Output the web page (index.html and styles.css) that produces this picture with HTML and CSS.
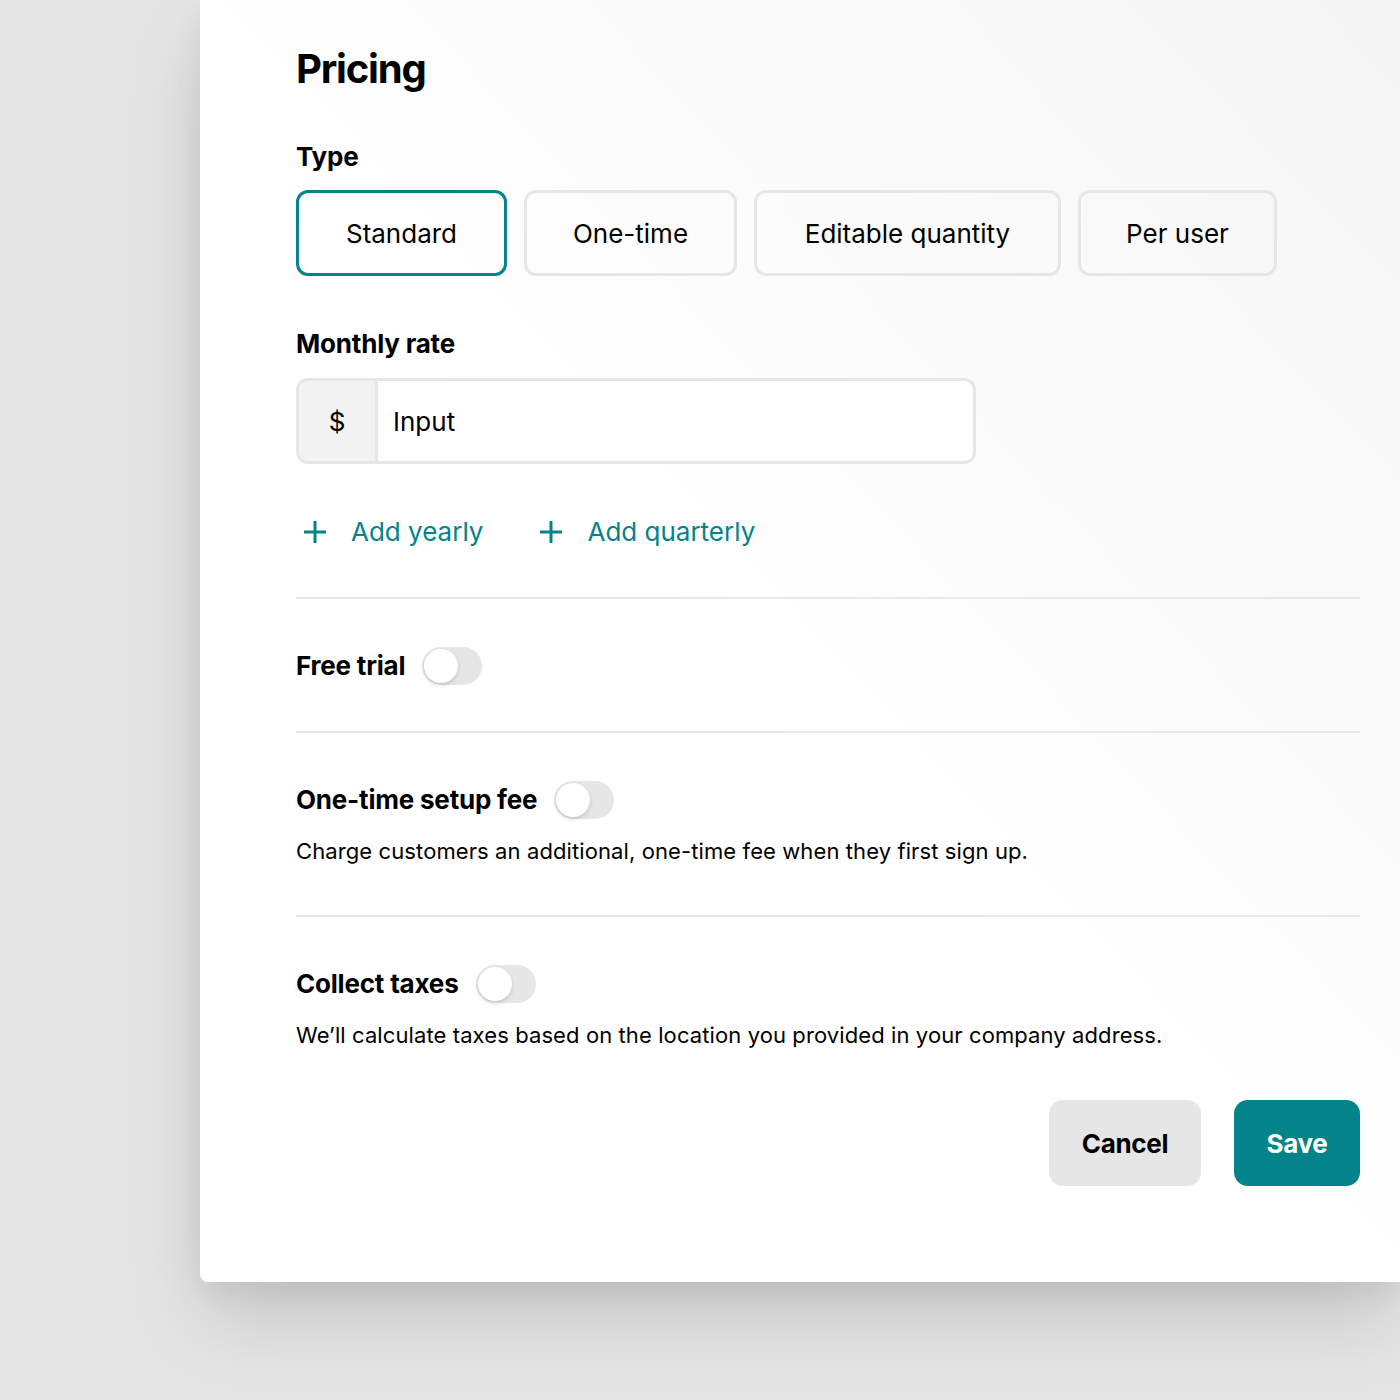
FILE: index.html
```html
<!DOCTYPE html>
<html lang="en">
<head>
<meta charset="utf-8">
<title>Pricing</title>
<link rel="stylesheet" href="styles.css">
</head>
<body>
<div class="card">
  <h1 class="title">Pricing</h1>

  <div class="label type-label">Type</div>
  <div class="types">
    <button class="type t-standard active">Standard</button>
    <button class="type t-onetime">One-time</button>
    <button class="type t-editable">Editable quantity</button>
    <button class="type t-peruser">Per user</button>
  </div>

  <div class="label rate-label">Monthly rate</div>
  <div class="input">
    <span class="prefix">$</span>
    <span class="value">Input</span>
  </div>

  <div class="adds">
    <a class="add">
      <svg class="plus" viewBox="0 0 24 24" width="24" height="24"><path d="M12 1v22M1 12h22" stroke="currentColor" stroke-width="3" fill="none"/></svg>
      <span>Add yearly</span>
    </a>
    <a class="add">
      <svg class="plus" viewBox="0 0 24 24" width="24" height="24"><path d="M12 1v22M1 12h22" stroke="currentColor" stroke-width="3" fill="none"/></svg>
      <span>Add quarterly</span>
    </a>
  </div>

  <div class="section first">
    <div class="row"><span class="label">Free trial</span><span class="toggle"><span class="knob"></span></span></div>
  </div>

  <div class="section second">
    <div class="row"><span class="label">One-time setup fee</span><span class="toggle"><span class="knob"></span></span></div>
    <p class="desc">Charge customers an additional, one-time fee when they first sign up.</p>
  </div>

  <div class="section third">
    <div class="row"><span class="label">Collect taxes</span><span class="toggle"><span class="knob"></span></span></div>
    <p class="desc">We’ll calculate taxes based on the location you provided in your company address.</p>
  </div>

  <div class="actions">
    <button class="btn cancel">Cancel</button>
    <button class="btn save">Save</button>
  </div>
</div>
</body>
</html>
```

FILE: styles.css
```css
* { box-sizing: border-box; }
html, body { margin: 0; padding: 0; }
body {
  background: #e6e6e6;
  font-family: Inter, "Liberation Sans", Arial, sans-serif;
  color: #000;
  width: 1400px;
  height: 1400px;
  overflow: hidden;
}
.card {
  margin-left: 200px;
  width: 1200px;
  padding: 45px 40px 96px 96px;
  background: linear-gradient(to bottom left, #f5f5f5 0%, #ffffff 55%);
  border-radius: 0 0 0 8px;
  box-shadow: 0 40px 80px rgba(0,0,0,0.14), 0 10px 30px rgba(0,0,0,0.06);
}
.title {
  margin: 0;
  font-size: 40px;
  line-height: 48px;
  font-weight: 700;
  letter-spacing: -1.2px;
}
.label {
  font-size: 26px;
  line-height: 32px;
  font-weight: 700;
  letter-spacing: -0.2px;
}
.type-label { margin-top: 48px; }
.types {
  display: flex;
  gap: 17px;
  margin-top: 17px;
}
.type {
  height: 86px;
  padding: 0;
  border: 3px solid #e6e6e6;
  border-radius: 12px;
  background: transparent;
  font-family: inherit;
  font-size: 26px;
  color: #000;
  letter-spacing: 0;
  flex: none;
}
.t-standard { width: 211px; }
.t-onetime { width: 213px; }
.t-editable { width: 307px; }
.t-peruser { width: 199px; }
.type.active { border-color: #03838a; }
.rate-label { margin-top: 52px; }
.input {
  margin-top: 18px;
  width: 680px;
  height: 86px;
  display: flex;
  border: 3px solid #e6e6e6;
  border-radius: 12px;
  overflow: hidden;
  background: #fff;
  font-size: 26px;
}
.prefix {
  width: 79px;
  background: #f2f2f2;
  border-right: 3px solid #e6e6e6;
  display: flex;
  align-items: center;
  justify-content: center;
}
.value {
  display: flex;
  align-items: center;
  padding-left: 15px;
}
.adds {
  display: flex;
  gap: 56px;
  margin-top: 52px;
  padding-left: 7px;
}
.add {
  display: flex;
  align-items: center;
  gap: 24px;
  color: #03838a;
  font-size: 26px;
  line-height: 32px;
  letter-spacing: 0;
}
.plus { display: block; }
.section {
  border-top: 2px solid #e8e8e8;
  padding-top: 48px;
}
.first { margin-top: 49px; }
.second { margin-top: 46px; }
.third { margin-top: 49px; }
.row {
  display: flex;
  align-items: center;
  gap: 17px;
  height: 38px;
}
.toggle {
  width: 60px;
  height: 38px;
  border-radius: 19px;
  background: #e6e6e6;
  position: relative;
}
.knob {
  position: absolute;
  left: 2px;
  top: 2px;
  width: 34px;
  height: 34px;
  border-radius: 50%;
  background: #fff;
  box-shadow: 0 2px 4px rgba(0,0,0,0.15);
}
.desc {
  margin: 17px 0 0;
  font-size: 22px;
  line-height: 30px;
  letter-spacing: 0.1px;
}
.actions {
  display: flex;
  justify-content: flex-end;
  gap: 33px;
  margin-top: 50px;
}
.btn {
  height: 86px;
  border: none;
  border-radius: 14px;
  font-family: inherit;
  font-size: 26px;
  font-weight: 700;
  letter-spacing: -0.3px;
}
.cancel { width: 152px; background: #e6e6e6; color: #000; }
.save { width: 126px; background: #03838a; color: #fff; }
```
